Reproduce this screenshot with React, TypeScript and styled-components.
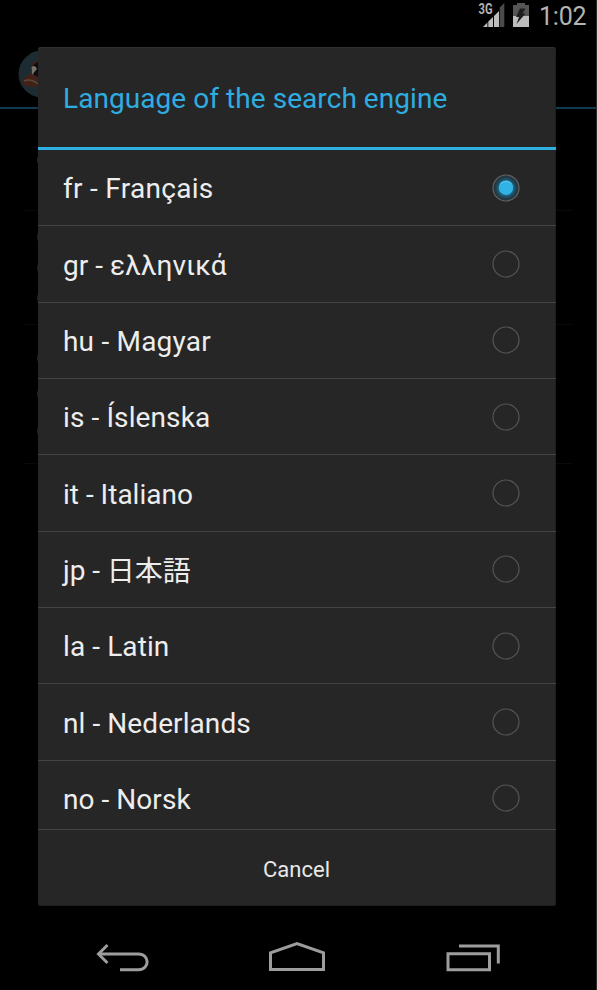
import React from "react";
import styled, { createGlobalStyle } from "styled-components";

const GlobalStyle = createGlobalStyle`
  html, body { margin: 0; padding: 0; background: #000; }
  * { box-sizing: border-box; }
`;

const Screen = styled.div`
  position: relative;
  width: 597px;
  height: 990px;
  overflow: hidden;
  display: flex;
  flex-direction: column;
  justify-content: space-between;
  background: #000;
  border-right: 1px solid #2c2c2c;
  font-family: Roboto, "Noto Sans CJK JP", sans-serif;
`;

const StatusBar = styled.header`
  height: 33px;
  padding-right: 9px;
  display: flex;
  justify-content: flex-end;
  align-items: flex-start;
`;

const StatusIcons = styled.svg`
  display: block;
  width: 60px;
  height: 33px;
`;

const Clock = styled.time`
  margin-left: 3px;
  width: 48px;
  font-size: 25px;
  line-height: 34px;
  letter-spacing: -0.2px;
  white-space: nowrap;
  color: #b4b4b4;
`;

const DimmedPage = styled.div`
  flex: 1;
`;

const ActionBar = styled.div`
  height: 76px;
  padding: 18px 0 0 18px;
  border-bottom: 2px solid #0d3c50;
`;

const AppIcon = styled.svg`
  display: block;
  width: 48px;
  height: 48px;
`;

const Preference = styled.div<{ $height: number }>`
  height: ${(p) => p.$height}px;
  margin: 0 24px 0 23px;
  padding: 0 0 0 14px;
  border-bottom: 1px solid #070b08;
  display: flex;
  flex-direction: column;
  justify-content: space-evenly;
`;

const Speck = styled.span`
  width: 4px;
  height: 8px;
  border-left: 1px solid #202020;
  border-radius: 50%;
`;

const Dialog = styled.section`
  position: absolute;
  left: 38px;
  top: 47px;
  width: 518px;
  height: 859px;
  display: flex;
  flex-direction: column;
  overflow: hidden;
  border-radius: 3px;
  background: #262626;
  box-shadow: inset 0 1px 0 #303030, inset -1px -1px 0 #1f1f1f;
`;

const Title = styled.h1`
  margin: 0;
  height: 103px;
  flex: none;
  padding: 0 25px;
  border-bottom: 3px solid #2fb0e2;
  font-size: 28px;
  font-weight: 400;
  line-height: 103px;
  letter-spacing: 0.06px;
  white-space: nowrap;
  color: #2fade0;
`;

const Options = styled.ul`
  margin: 0;
  padding: 0;
  list-style: none;
  height: 679px;
  flex: none;
  overflow: hidden;
`;

const Option = styled.li`
  height: 76.35px;
  padding: 0 36.5px 0 25px;
  display: flex;
  align-items: center;
  justify-content: space-between;
  border-bottom: 1px solid #434343;
  color: #ededed;
`;

const OptionLabel = styled.span<{ $spacing: number }>`
  font-size: 28px;
  line-height: 40px;
  padding-top: 3px;
  letter-spacing: ${(p) => p.$spacing}px;
  white-space: nowrap;
`;

const Ideographs = styled.span`
  display: inline-block;
  line-height: 28px;
  transform: translateY(1px);
`;

const RadioMark = styled.svg`
  display: block;
  width: 28px;
  height: 28px;
  flex: none;
`;

const Cancel = styled.button`
  flex: 1;
  width: 100%;
  padding: 2px 1px 0 0;
  border: 0;
  border-top: 1px solid #434343;
  background: transparent;
  color: #e8e8e8;
  font: 400 22px Roboto, sans-serif;
`;

const NavigationBar = styled.nav`
  height: 66px;
  flex: none;
`;

const NavIcons = styled.svg`
  display: block;
  width: 596px;
  height: 66px;
`;

const languages = [
  { code: "fr", name: "Français", spacing: 0.29 },
  { code: "gr", name: "ελληνικά", spacing: 0.04 },
  { code: "hu", name: "Magyar", spacing: 0.2 },
  { code: "is", name: "Íslenska", spacing: 0.1 },
  { code: "it", name: "Italiano", spacing: 0 },
  { code: "jp", name: "日本語", spacing: -0.05, ideographic: true },
  { code: "la", name: "Latin", spacing: 0.1 },
  { code: "nl", name: "Nederlands", spacing: 0.08 },
  { code: "no", name: "Norsk", spacing: 0.05 },
];

function Radio({ checked }: { checked: boolean }) {
  return (
    <RadioMark viewBox="0 0 28 28">
      <defs>
        <radialGradient id="glow">
          <stop offset="0.5" stopColor="#1c6d8e" />
          <stop offset="0.78" stopColor="#20414f" />
          <stop offset="1" stopColor="#262d31" />
        </radialGradient>
      </defs>
      <circle cx="14" cy="14" r="13" fill={checked ? "url(#glow)" : "none"} stroke={checked ? "#606466" : "#555"} strokeWidth="1.2" />
      {checked && <circle cx="14" cy="13.7" r="7.2" fill="#31b3e6" />}
      {checked && <path d="M8.5 10A7 7 0 0 1 19.5 10" fill="none" stroke="#62c5ec" strokeWidth="1" />}
    </RadioMark>
  );
}

export default function App() {
  return (
    <>
      <GlobalStyle />
      <Screen>
        <StatusBar>
          <StatusIcons viewBox="476 0 60 33">
            <text x="478.5" y="13.5" fontFamily="Roboto" fontWeight="700" fontSize="14" textLength="14" lengthAdjust="spacingAndGlyphs" fill="#b4b4b4">3G</text>
            <path d="M499.7 7.5 504.3 3V27H499.7Z" fill="#4b4b4b" />
            <path d="M483 27 487.4 22.5V27ZM488.3 21.5 493 17V27H488.3ZM494 16 499 11V27H494Z" fill="#bebebe" />
            <path d="M513 5H517V3H525V5H529V16H513Z" fill="#555" />
            <path d="M513 16H529V27H513Z" fill="#bcbcbc" />
            <path d="M520 8.5H525.5L522.5 13.5H525.5L516.5 24 519 17H516Z" fill="#1d1d1d" />
          </StatusIcons>
          <Clock>1:02</Clock>
        </StatusBar>
        <DimmedPage>
          <ActionBar>
            <AppIcon viewBox="0 0 48 48">
              <circle cx="24" cy="23" r="23.5" fill="#1d2b32" />
              <path d="M13 14Q16 9 24 8V34Q13 38 6 34Q3 31 5 28L13 22Z" fill="#42211a" />
              <path d="M13 18Q17 10 24 10V26Q14 26 13 18Z" fill="#0c0c0b" />
              <path d="M13.5 16Q17 13 19 18L14 24Z" fill="#77736a" />
              <path d="M6 30Q13 27 20 33" fill="none" stroke="#5a4938" strokeWidth="1.5" />
            </AppIcon>
          </ActionBar>
          <Preference $height={102}><Speck /></Preference>
          <Preference $height={114}><Speck /><Speck /><Speck /></Preference>
          <Preference $height={139}><Speck /><Speck /><Speck /></Preference>
        </DimmedPage>
        <NavigationBar>
          <NavIcons viewBox="0 924 596 66" fill="none" stroke="#9d9d9d" strokeWidth="3">
            <path d="M98.5 954H138.5C150 954 150 969.7 138.5 969.7H120" />
            <path d="M107.5 945 98.5 954 107.5 963" />
            <path d="M270.5 969.5V952.8L297 943.5 323.5 952.8V969.5Z" />
            <path d="M448 953.7H489.5V969.7H448ZM459 946H498.3V963.5" />
          </NavIcons>
        </NavigationBar>
        <Dialog role="dialog" aria-label="Language of the search engine">
          <Title>Language of the search engine</Title>
          <Options>
            {languages.map((l, i) => (
              <Option key={l.code}>
                <OptionLabel $spacing={l.spacing}>
                  {l.code} - {l.ideographic ? <Ideographs>{l.name}</Ideographs> : l.name}
                </OptionLabel>
                <Radio checked={i === 0} />
              </Option>
            ))}
          </Options>
          <Cancel>Cancel</Cancel>
        </Dialog>
      </Screen>
    </>
  );
}
